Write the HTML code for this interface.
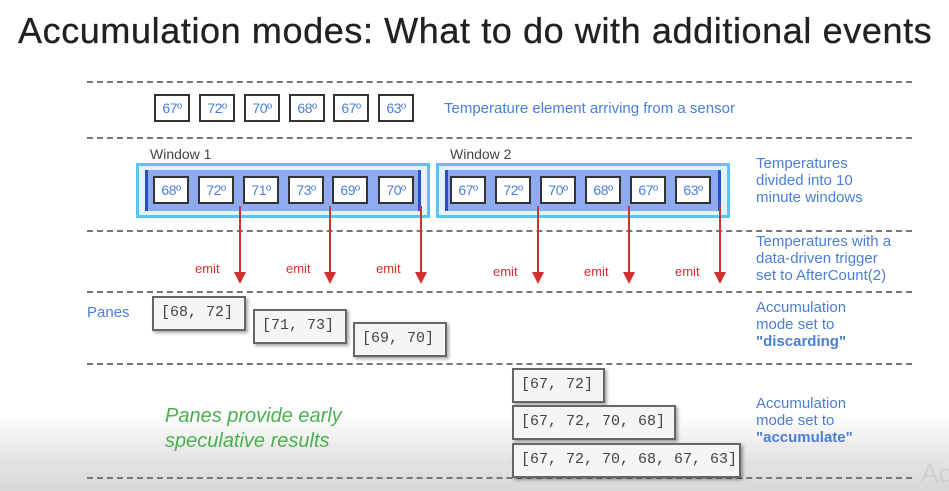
<!DOCTYPE html>
<html><head><meta charset="utf-8"><style>
*{margin:0;padding:0;box-sizing:border-box}
html,body{width:949px;height:491px;overflow:hidden}
body{position:relative;font-family:"Liberation Sans",sans-serif;background:linear-gradient(to bottom,#fff 0,#fff 415px,#e6e6e6 455px,#d8d8d8 491px)}
.a{position:absolute}
.t{left:18px;top:10px;font-size:36px;color:#202124;white-space:nowrap;letter-spacing:0.6px;-webkit-text-stroke:0.3px #202124}
.d{position:absolute;left:87px;width:825px;height:0;border-top:2px dashed #777}
.b{position:absolute;width:36px;height:28px;border:2px solid #333;background:#fff;color:#4a7fd6;font-size:14px;text-align:center;line-height:24px;letter-spacing:-0.5px}
.bl{color:#4a7fd6;font-size:15px;line-height:17px;white-space:nowrap}
.w{position:absolute;top:163px;height:55px;width:294px;border:3px solid #5cc4f2;background:#e3f3fc}
.wi{position:absolute;left:6px;right:6px;top:4px;bottom:4px;background:#8eaaf0;border-left:3px solid #2a4fc4;border-right:3px solid #2a4fc4}
.r{position:absolute;width:2px;background:#d32f2f}
.h{position:absolute;width:0;height:0;border-left:6px solid transparent;border-right:6px solid transparent;border-top:12px solid #d32f2f}
.e{position:absolute;color:#d32f2f;font-size:13px}
.p{position:absolute;height:35px;border:2px solid #666;background:#f5f5f5;font-family:"Liberation Mono",monospace;font-size:15px;color:#444;padding-left:7px;line-height:30px;white-space:nowrap;box-shadow:2px 2px 3px rgba(0,0,0,.35)}
</style></head><body>
<div class="a t">Accumulation modes: What to do with additional events</div>
<div class="d" style="top:81px"></div>
<div class="d" style="top:137px"></div>
<div class="d" style="top:230px"></div>
<div class="d" style="top:291px"></div>
<div class="d" style="top:363px"></div>
<div class="d" style="top:477px"></div>

<div class="b" style="left:154px;top:94px">67º</div>
<div class="b" style="left:199px;top:94px">72º</div>
<div class="b" style="left:244px;top:94px">70º</div>
<div class="b" style="left:289px;top:94px">68º</div>
<div class="b" style="left:333px;top:94px">67º</div>
<div class="b" style="left:378px;top:94px">63º</div>
<div class="a bl" style="left:444px;top:100px">Temperature element arriving from a sensor</div>

<div class="a" style="left:150px;top:146px;font-size:14px;color:#444">Window 1</div>
<div class="a" style="left:450px;top:146px;font-size:14px;color:#444">Window 2</div>
<div class="w" style="left:136px"><div class="wi"></div></div>
<div class="w" style="left:436px"><div class="wi"></div></div>
<div class="b" style="left:153px;top:176px">68º</div>
<div class="b" style="left:198px;top:176px">72º</div>
<div class="b" style="left:243px;top:176px">71º</div>
<div class="b" style="left:288px;top:176px">73º</div>
<div class="b" style="left:332px;top:176px">69º</div>
<div class="b" style="left:378px;top:176px">70º</div>
<div class="b" style="left:450px;top:176px">67º</div>
<div class="b" style="left:495px;top:176px">72º</div>
<div class="b" style="left:540px;top:176px">70º</div>
<div class="b" style="left:585px;top:176px">68º</div>
<div class="b" style="left:630px;top:176px">67º</div>
<div class="b" style="left:675px;top:176px">63º</div>

<div class="r" style="left:239px;top:206px;height:68px"></div><div class="h" style="left:234px;top:272px"></div>
<div class="r" style="left:329px;top:206px;height:68px"></div><div class="h" style="left:324px;top:272px"></div>
<div class="r" style="left:420px;top:206px;height:68px"></div><div class="h" style="left:415px;top:272px"></div>
<div class="r" style="left:537px;top:206px;height:68px"></div><div class="h" style="left:532px;top:272px"></div>
<div class="r" style="left:628px;top:206px;height:68px"></div><div class="h" style="left:623px;top:272px"></div>
<div class="r" style="left:719px;top:206px;height:68px"></div><div class="h" style="left:714px;top:272px"></div>
<div class="e" style="left:195px;top:261px">emit</div>
<div class="e" style="left:286px;top:261px">emit</div>
<div class="e" style="left:376px;top:261px">emit</div>
<div class="e" style="left:493px;top:264px">emit</div>
<div class="e" style="left:584px;top:264px">emit</div>
<div class="e" style="left:675px;top:264px">emit</div>

<div class="a bl" style="left:756px;top:155px">Temperatures<br>divided into 10<br>minute windows</div>
<div class="a bl" style="left:756px;top:233px">Temperatures with a<br>data-driven trigger<br>set to AfterCount(2)</div>
<div class="a bl" style="left:756px;top:299px">Accumulation<br>mode set to<br><b>"discarding"</b></div>
<div class="a bl" style="left:756px;top:395px">Accumulation<br>mode set to<br><b>"accumulate"</b></div>

<div class="a bl" style="left:87px;top:304px">Panes</div>
<div class="p" style="left:152px;top:296px;width:94px">[68, 72]</div>
<div class="p" style="left:253px;top:309px;width:94px">[71, 73]</div>
<div class="p" style="left:353px;top:322px;width:94px">[69, 70]</div>

<div class="p" style="left:512px;top:368px;width:93px">[67, 72]</div>
<div class="p" style="left:512px;top:405px;width:164px">[67, 72, 70, 68]</div>
<div class="p" style="left:512px;top:443px;width:229px">[67, 72, 70, 68, 67, 63]</div>

<div class="a" style="left:165px;top:404px;font-size:20px;font-style:italic;color:#4caf50;line-height:25px">Panes provide early<br>speculative results</div>
<div class="a" style="left:921px;top:458px;font-size:26px;color:#cfcfcf">Ac</div>
</body></html>
